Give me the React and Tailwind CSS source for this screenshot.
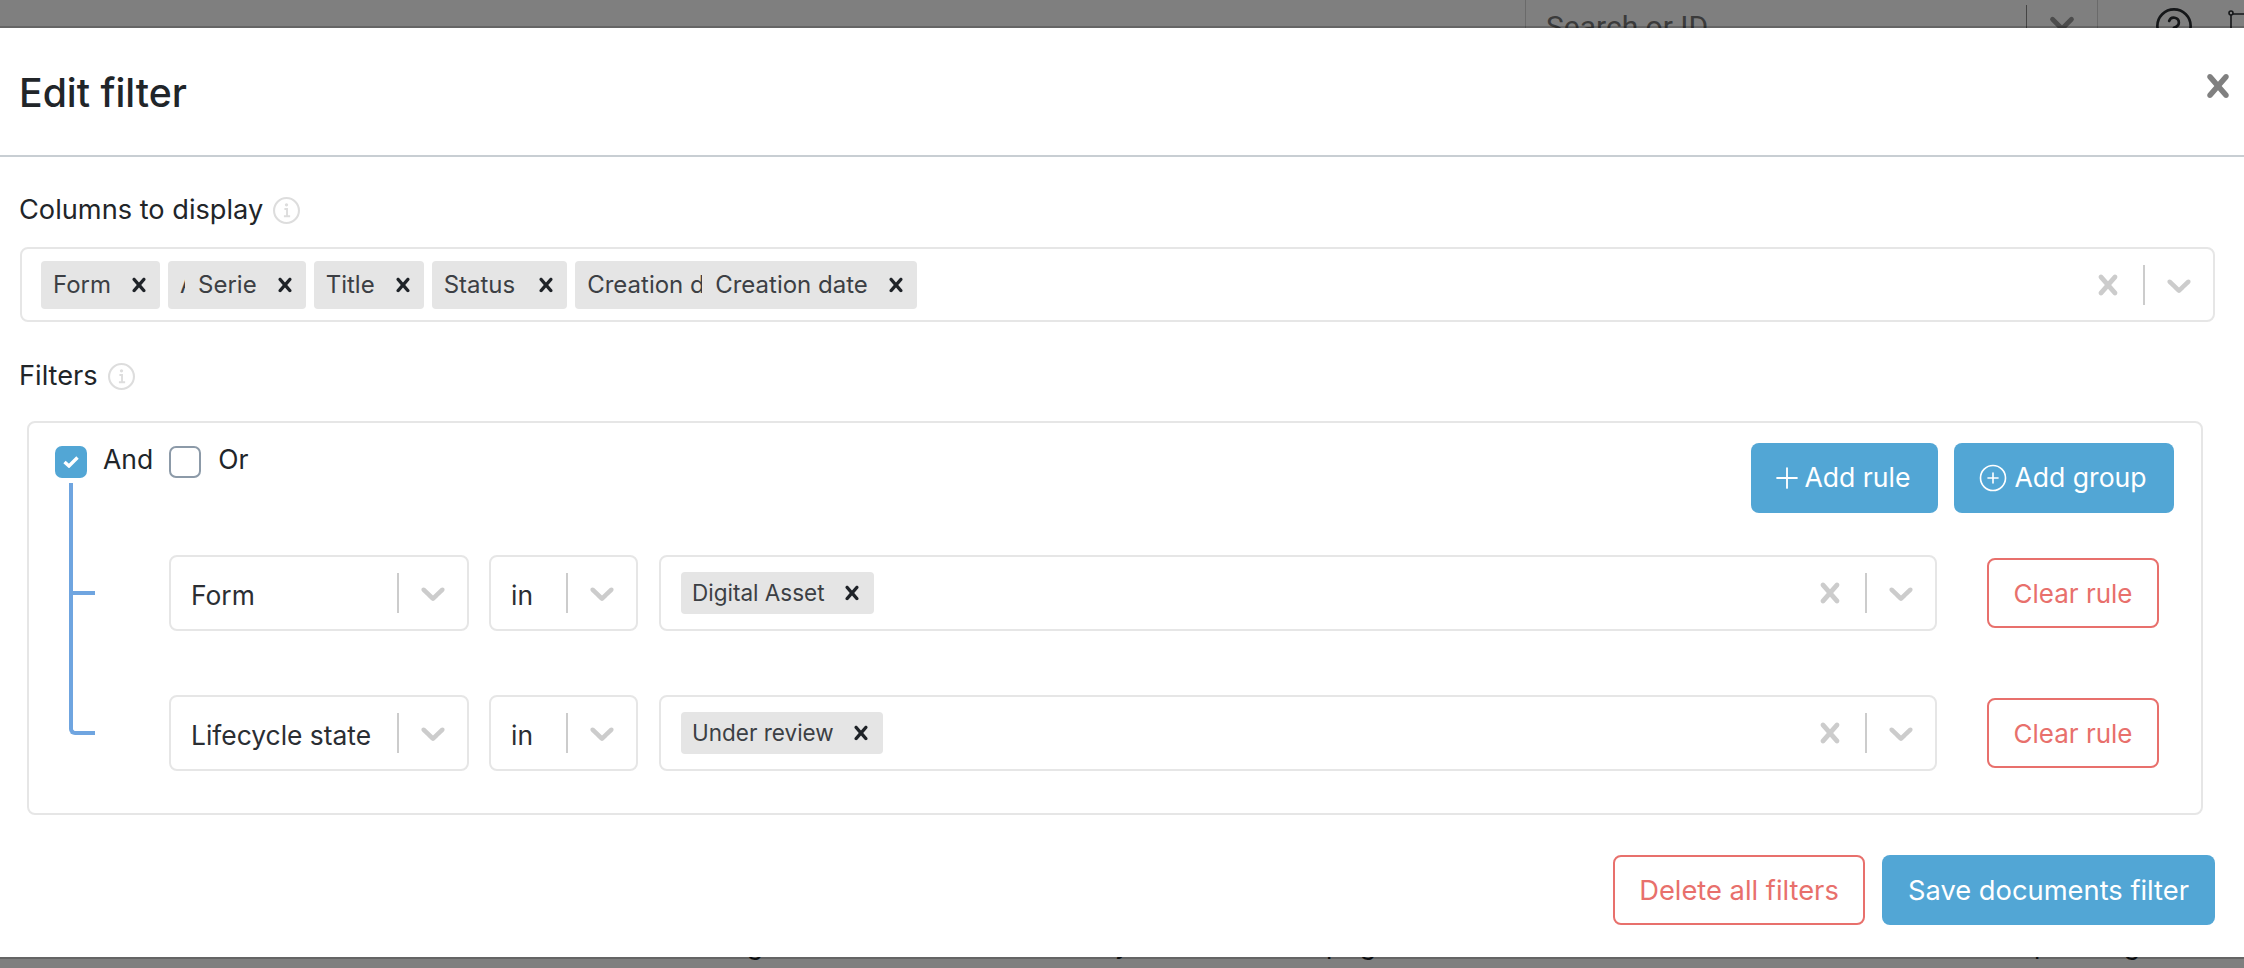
import React from 'react';
import { CircleHelp, ChevronDown, Plus, CirclePlus } from 'lucide-react';

const CROSS = 'M14.348 14.849c-0.469 0.469-1.229 0.469-1.697 0l-2.651-3.030-2.651 3.029c-0.469 0.469-1.229 0.469-1.697 0-0.469-0.469-0.469-1.229 0-1.697l2.758-3.15-2.759-3.152c-0.469-0.469-0.469-1.228 0-1.697s1.228-0.469 1.697 0l2.652 3.031 2.651-3.031c0.469-0.469 1.228-0.469 1.697 0s0.469 1.229 0 1.697l-2.758 3.152 2.758 3.15c0.469 0.469 0.469 1.229 0 1.698z';
const CHEVRON = 'M4.516 7.548c0.436-0.446 1.043-0.481 1.576 0l3.908 3.747 3.908-3.747c0.533-0.481 1.141-0.446 1.576 0 0.436 0.445 0.408 1.197 0 1.615-0.406 0.418-4.695 4.502-4.695 4.502-0.217 0.223-0.502 0.335-0.789 0.335s-0.572-0.112-0.79-0.335c0 0-4.287-4.084-4.695-4.502s-0.436-1.17 0-1.615z';

function Glyph({ d, className }) {
  return (
    <svg viewBox="0 0 20 20" className={className} fill="currentColor">
      <path d={d} />
    </svg>
  );
}

function InfoIcon() {
  return (
    <svg viewBox="0 0 26 26" className="w-[27px] h-[27px] text-[#dddddd]" fill="none" stroke="currentColor">
      <circle cx="13" cy="13" r="12" strokeWidth="2" />
      <path d="M11 11.5h2.5v7M10.5 18.5h6" strokeWidth="1.8" />
      <circle cx="13" cy="7.5" r="1.6" fill="currentColor" stroke="none" />
    </svg>
  );
}

function Chip({ label, clipped, clipClass, xClass = 'ml-[14px]' }) {
  return (
    <div className="h-12 flex items-center pl-3 pr-[7px] bg-[#e5e5e5] rounded-[4px] text-[24px] text-[#3c3f44] whitespace-nowrap">
      {clipped && <span className={`overflow-hidden mr-[13px] ${clipClass}`}>{clipped}</span>}
      <span>{label}</span>
      <Glyph d={CROSS} className={`w-7 h-7 text-[#1f2328] ${xClass}`} />
    </div>
  );
}

function RuleChip({ label }) {
  return (
    <div className="h-[42px] flex items-center pl-[11px] pr-2 bg-[#e5e5e5] rounded-[4px] text-[22.5px] text-[#3c3f44] whitespace-nowrap">
      <span>{label}</span>
      <Glyph d={CROSS} className="w-7 h-7 ml-[13px] text-[#1f2328]" />
    </div>
  );
}

function Controls({ clear }) {
  return (
    <div className="flex items-center ml-auto shrink-0">
      {clear && <Glyph d={CROSS} className="w-10 h-10 text-[#cccccc] mr-[15px]" />}
      <div className="w-0.5 h-10 bg-[#cccccc]" />
      <Glyph d={CHEVRON} className="w-10 h-10 text-[#cccccc] ml-[14px]" />
    </div>
  );
}

function SelectBox({ value, className }) {
  return (
    <div className={`h-[76px] flex items-center border-2 border-[#e6e6e6] rounded-lg pl-5 pr-[14px] text-[26.4px] text-[#2b2e33] whitespace-nowrap ${className}`}>
      <span className="pt-[6px]">{value}</span>
      <Controls />
    </div>
  );
}

function Rule({ field, value, className }) {
  return (
    <div className={`flex items-center ml-[114px] mr-[15px] ${className}`}>
      <SelectBox value={field} className="w-[300px]" />
      <SelectBox value="in" className="w-[149px] ml-5" />
      <div className="flex-1 h-[76px] flex items-center border-2 border-[#e6e6e6] rounded-lg pl-5 pr-[14px] ml-[21px]">
        <RuleChip label={value} />
        <Controls clear />
      </div>
      <button className="w-[172px] h-[70px] ml-[50px] border-2 border-[#e8706c] rounded-lg text-[26px] text-[#e8706c]">Clear rule</button>
    </div>
  );
}

export default function App() {
  return (
    <div className="relative w-[2244px] h-[968px] overflow-hidden bg-white font-['Inter',sans-serif]">
      {/* Page behind the dialog */}
      <div className="h-[60px] flex items-start text-[#2b2e33] font-['Roboto',sans-serif]">
        <div className="ml-[1525px] w-[573px] h-[60px] shrink-0 flex border-x border-[#d5d5d5]">
          <span className="ml-5 mt-[4px] text-[30px] text-[#777777]">Search or ID</span>
          <div className="ml-auto mt-[5px] w-px h-[55px] bg-[#888888]" />
          <ChevronDown size={38} strokeWidth={3} className="mt-[5px] mx-4 text-[#999999]" />
        </div>
        <CircleHelp size={40} strokeWidth={1.6} className="ml-[56px] mt-[6px] shrink-0" />
        <svg viewBox="0 0 24 40" className="w-6 h-10 ml-[34px] mt-[8px] shrink-0" fill="none" stroke="currentColor" strokeWidth="1.6">
          <circle cx="3" cy="5" r="2" />
          <path d="M3 7v33M5 6h19M5 22h19" />
        </svg>
      </div>
      <div className="absolute top-[930px] left-0 text-[26px] leading-[30px] text-[#212529]">
        <span className="absolute left-[747px]">g</span>
        <span className="absolute left-[1115px]">y</span>
        <span className="absolute left-[1326px]">p</span>
        <span className="absolute left-[1360px]">g</span>
        <span className="absolute left-[2034px]">p</span>
        <span className="absolute left-[2124px]">g</span>
      </div>
      <div className="absolute inset-0 bg-black/50" />

      {/* Dialog */}
      <div className="absolute top-[26px] left-0 right-0 h-[933px] bg-white bg-clip-padding border-y-2 border-black/20 text-[#212529]">
        <div className="h-[129px] flex items-center justify-between border-b-2 border-[#c8ced3] pl-[19px] pr-[3px]">
          <h1 className="text-[39.2px] font-medium leading-none mt-[3px]">Edit filter</h1>
          <Glyph d={CROSS} className="w-[46px] h-[46px] -mt-[11px] text-[#808080]" />
        </div>

        <div className="px-5 pt-[37px]">
          <div className="h-8 -ml-px flex items-center gap-[10px] text-[27.2px]">
            <span>Columns to display</span>
            <InfoIcon />
          </div>
          <div className="mt-[21px] h-[75px] flex items-center gap-2 border-2 border-[#e6e6e6] rounded-lg pl-[19px] pr-[14px] mr-[9px]">
            <Chip label="Form" />
            <Chip label="Serie" clipped="A" clipClass="w-[5px]" />
            <Chip label="Title" />
            <Chip label="Status" xClass="ml-[17px]" />
            <Chip label="Creation date" clipped="Creation date" clipClass="w-[115px]" />
            <Controls clear />
          </div>

          <div className="mt-[38px] h-8 -ml-px flex items-center gap-[10px] text-[27.2px]">
            <span>Filters</span>
            <InfoIcon />
          </div>

          <div className="relative mt-[29px] ml-[7px] mr-[21px] h-[394px] border-2 border-[#e6e6e6] rounded-lg pt-5 pl-[26px] pr-[27px]">
            {/* Tree connector */}
            <div className="absolute left-[40px] top-[60px] w-[26px] h-[252px] border-l-4 border-b-4 border-[#6fa5e0] rounded-bl-[6px]" />
            <div className="absolute left-[40px] top-[168px] w-[26px] h-1 bg-[#6fa5e0]" />

            <div className="flex items-start h-[70px]">
              <div className="w-8 h-8 mt-[3px] flex items-center justify-center rounded-[7px] bg-[#52a6d5]">
                <svg viewBox="0 0 16 12" className="w-4 h-3" fill="none" stroke="white" strokeWidth="3.4">
                  <path d="M1.5 6l4.5 4 8.5-8.5" />
                </svg>
              </div>
              <span className="ml-4 text-[26.5px] leading-8">And</span>
              <div className="w-8 h-8 mt-[3px] ml-4 rounded-[7px] border-2 border-[#8c9aa8]" />
              <span className="ml-[17px] text-[26.5px] leading-8">Or</span>
              <div className="ml-auto flex gap-4 text-[26.6px] text-white">
                <button className="w-[187px] h-[70px] flex items-center justify-center rounded-lg bg-[#52a6d5]">
                  <Plus size={34} strokeWidth={1.3} className="-ml-[8px]" />
                  Add rule
                </button>
                <button className="w-[220px] h-[70px] flex items-center justify-center gap-[6px] rounded-lg bg-[#52a6d5]">
                  <CirclePlus size={30} strokeWidth={1.3} className="-ml-[3px]" />
                  Add group
                </button>
              </div>
            </div>

            <Rule field="Form" value="Digital Asset" className="mt-[42px]" />
            <Rule field="Lifecycle state" value="Under review" className="mt-[64px]" />
          </div>

          <div className="mt-[40px] flex justify-end gap-[17px] mr-[9px] text-[27.3px]">
            <button className="w-[252px] h-[70px] pt-[2px] border-2 border-[#e8706c] rounded-lg text-[#e8706c]">Delete all filters</button>
            <button className="w-[333px] h-[70px] pt-[2px] rounded-lg bg-[#52a6d5] text-white">Save documents filter</button>
          </div>
        </div>
      </div>
    </div>
  );
}
